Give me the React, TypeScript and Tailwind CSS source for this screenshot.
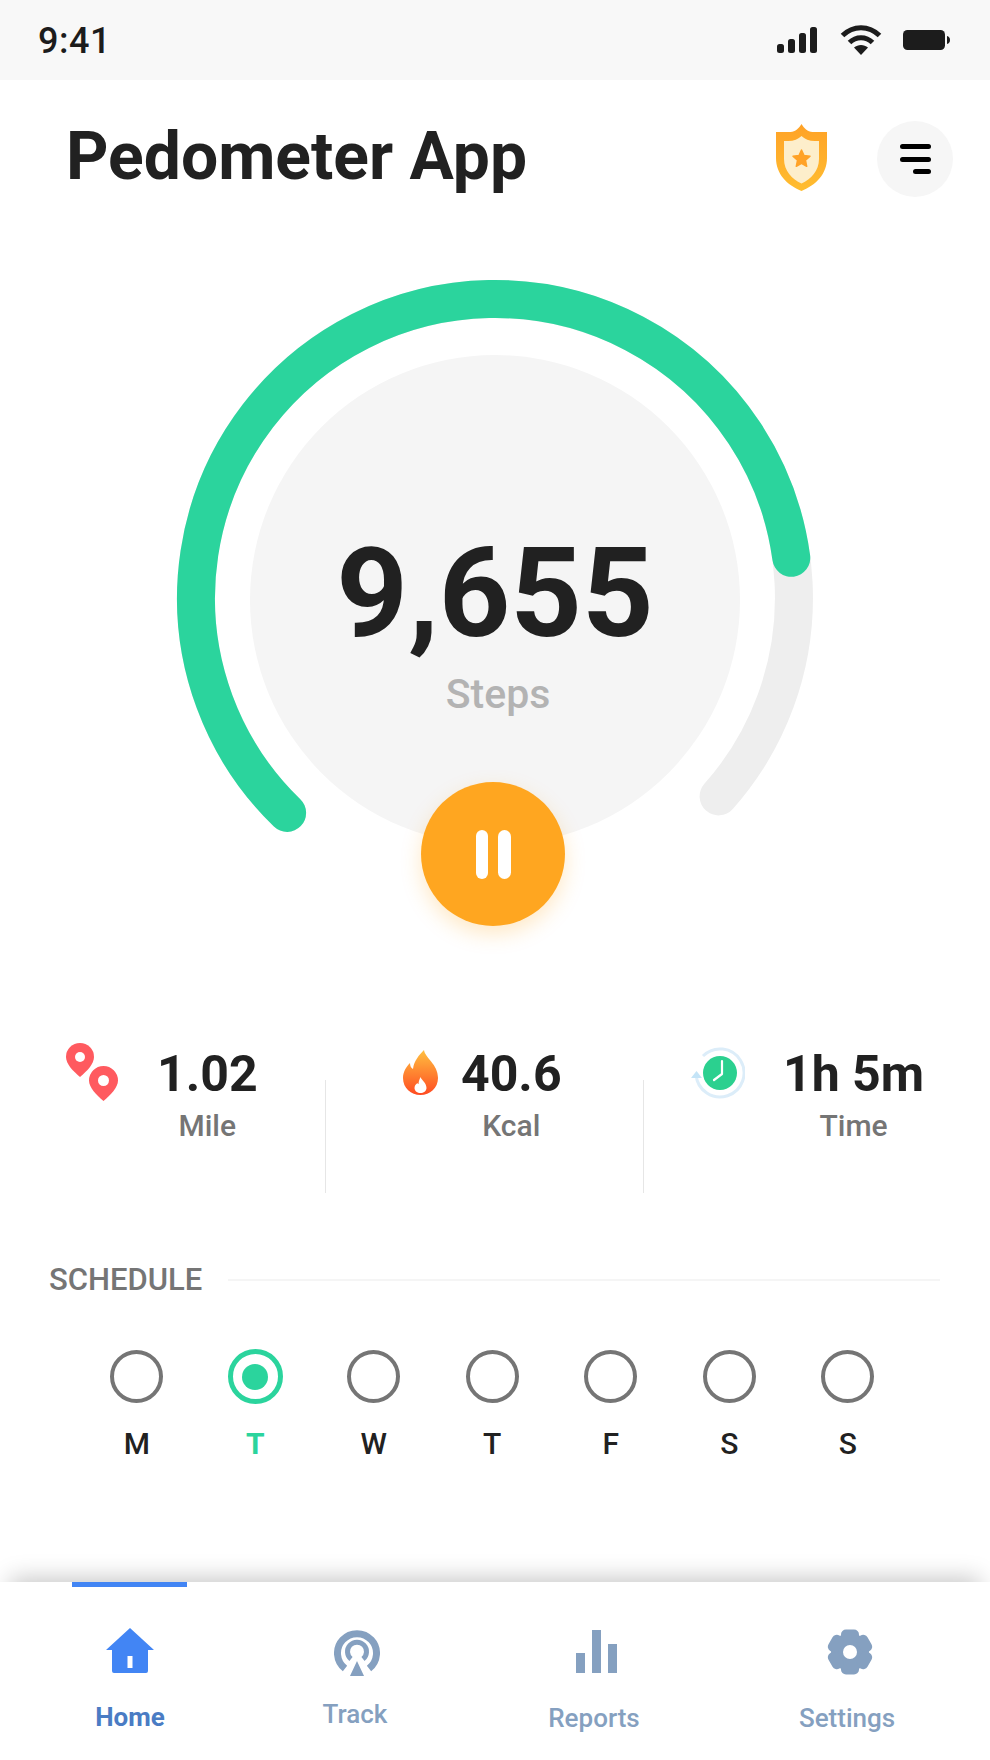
const days = ['M', 'T', 'W', 'T', 'F', 'S', 'S'];

function StatusIcons() {
  return (
    <div className="flex items-center gap-[21px]">
      <svg width="42" height="26" viewBox="0 0 42 26" fill="#1c1c1c">
        <rect x="0" y="17" width="7" height="9" rx="2.5" />
        <rect x="11" y="12" width="7" height="14" rx="2.5" />
        <rect x="22" y="6" width="7" height="20" rx="2.5" />
        <rect x="33" y="0" width="7" height="26" rx="2.5" />
      </svg>
      <svg width="42" height="30" viewBox="0 0 42 30" fill="none" stroke="#1c1c1c" strokeWidth="5">
        <path d="M2.5 10.5C13 0 29 0 39.5 10.5" />
        <path d="M9.5 17.5C16 11 26 11 32.5 17.5" />
        <path d="M21 30l-7-7.5c4-3.4 10-3.4 14 0z" fill="#1c1c1c" stroke="none" />
      </svg>
      <svg width="47" height="20" viewBox="0 0 47 20" fill="#1c1c1c">
        <rect x="0" y="0" width="42" height="20" rx="4.5" />
        <path d="M44 6c2 .5 3 2 3 4s-1 3.500-3 4z" />
      </svg>
    </div>
  );
}

function ShieldIcon() {
  return (
    <svg width="51" height="67" viewBox="0 0 51 67">
      <defs>
        <linearGradient id="shield" x1="0" y1="0" x2="0" y2="1">
          <stop offset="0" stopColor="#ffa227" />
          <stop offset="1" stopColor="#ffbd30" />
        </linearGradient>
      </defs>
      <path d="M25.5 0c2.500 4 6 8 11 8H51v26c0 16-11 27-25.500 33C11 61 0 50 0 34V8h14.500c5 0 8.500-4 11-8z" fill="url(#shield)" />
      <path d="M25.500 12c3 3 8 5 13 5h4.500v18c0 12-8 20-17.500 24.500C16 55 8 47 8 35V17h4.500c5 0 10-2 13-5z" fill="#fdeecb" />
      <path d="M25.500 26l2.500 5.500 6 .7-4.500 4.100 1.200 6-5.200-3-5.200 3 1.200-6-4.500-4.100 6-.7z" fill="#ffa227" stroke="#ffa227" strokeWidth="1.500" strokeLinejoin="round" />
    </svg>
  );
}

function Gauge() {
  return (
    <div className="relative mx-auto mt-[83px] flex h-[647px] w-[640px] flex-col items-center">
      <svg className="absolute inset-0" width="640" height="647" viewBox="0 0 640 647" fill="none">
        <circle cx="320" cy="321" r="245" fill="#f5f5f5" />
        <path d="M112.100 533.900A299 299 0 1 1 543.600 517.400" stroke="#eeeeee" strokeWidth="38" strokeLinecap="round" />
        <path d="M112.100 533.900A299 299 0 1 1 616.300 278.800" stroke="#2bd49d" strokeWidth="38" strokeLinecap="round" />
      </svg>
      <div className="relative mt-[245px] text-[125px] leading-[140px] font-bold text-[#212121]">9,655</div>
      <div className="relative mt-[7px] ml-[6px] text-[41px] leading-[46px] font-medium text-[#b3b3b3]">Steps</div>
      <button className="absolute bottom-0 left-[246px] flex h-[144px] w-[144px] items-center justify-center gap-[10px] rounded-full bg-[#ffa620] shadow-[0_8px_20px_rgba(255,166,32,0.25)]">
        <span className="h-[49px] w-[12.500px] rounded-full bg-white" />
        <span className="h-[49px] w-[12.500px] rounded-full bg-white" />
      </button>
    </div>
  );
}

function PinsIcon() {
  return (
    <svg width="52" height="58" viewBox="0 0 52 58">
      <path d="M14 0a14 14 0 0 1 14 14c0 7-7 14-14 20C7 28 0 21 0 14A14 14 0 0 1 14 0z" fill="#ff5a5f" />
      <circle cx="14" cy="14" r="5" fill="#fff" />
      <path d="M37.500 23a14.500 14.500 0 0 1 14.500 14.500c0 7-7.500 14.500-14.500 20.500C30.500 52 23 44.500 23 37.500A14.500 14.500 0 0 1 37.500 23z" fill="#ff5a5f" />
      <circle cx="37.500" cy="37.500" r="5.500" fill="#fff" />
    </svg>
  );
}

function FlameIcon() {
  return (
    <svg width="35" height="45" viewBox="0 0 35 45">
      <defs>
        <linearGradient id="flame" x1="0" y1="0" x2="0" y2="1">
          <stop offset="0" stopColor="#ffc040" />
          <stop offset="1" stopColor="#ff4b22" />
        </linearGradient>
      </defs>
      <path d="M21 0c1 8 14 14 14 28 0 10-8 17-17.500 17S0 38 0 28c0-6 3-11 7-15 0 3 1 5 3 6 1-8 6-14 11-19z" fill="url(#flame)" />
      <path d="M17.500 27c1 3 6 6 6 11 0 3-3 5-6 5s-6-2-6-5c0-3 2-4 3-5 0 1 1 1 1 1 0-2 1-5 2-7z" fill="#fff" />
    </svg>
  );
}

function ClockIcon() {
  return (
    <svg width="54" height="52" viewBox="0 0 54 52" fill="none">
      <path d="M12 9A24 24 0 1 1 5.100 28" stroke="#dcedf9" strokeWidth="3" />
      <path d="M0 31h11l-5.500-7z" fill="#c4e4f7" />
      <circle cx="29" cy="26" r="17" fill="#2bd08f" />
      <path d="M31 14v13l-8 6" stroke="#fff" strokeWidth="2.200" strokeLinecap="round" strokeLinejoin="round" />
    </svg>
  );
}

function Stat({ value, label, className, gap, icon }: { value: string; label: string; className: string; gap: string; icon: React.ReactNode }) {
  return (
    <div className={`flex items-start ${className}`}>
      {icon}
      <div className={`flex flex-col items-center ${gap}`}>
        <div className="text-[50px] leading-[60px] font-bold text-[#212121]">{value}</div>
        <div className="mt-[4px] text-[30px] leading-[36px] font-medium text-[#757575]">{label}</div>
      </div>
    </div>
  );
}

function Stats() {
  return (
    <div className="mt-[117px] flex h-[150px]">
      <Stat className="w-[325px] pl-[66px]" gap="ml-[39px] mt-[1px]" value="1.02" label="Mile" icon={<PinsIcon />} />
      <div className="h-[113px] w-px self-end bg-[#e6e6e6]" />
      <Stat className="w-[317px] pl-[77px]" gap="ml-[23px] mt-[1px]" value="40.6" label="Kcal" icon={<div className="mt-[7px]"><FlameIcon /></div>} />
      <div className="h-[113px] w-px self-end bg-[#e6e6e6]" />
      <Stat className="flex-1 pl-[47px]" gap="ml-[38px] mt-[1px]" value="1h 5m" label="Time" icon={<div className="mt-[4px]"><ClockIcon /></div>} />
    </div>
  );
}

function Schedule() {
  return (
    <div className="mt-[69px]">
      <div className="flex items-center pr-[50px] pl-[49px]">
        <span className="text-[31px] leading-[36px] font-medium text-[#757575]">SCHEDULE</span>
        <div className="ml-[26px] h-[2px] flex-1 bg-[#f5f5f5]" />
      </div>
      <div className="mt-[51px] flex pl-[77.500px]">
        {days.map((day, i) => (
          <div key={i} className="flex w-[118.500px] flex-col items-center">
            {i === 1 ? (
              <div className="flex h-[55px] w-[55px] items-center justify-center rounded-full border-[5px] border-[#2bd49d]">
                <div className="h-[26px] w-[26px] rounded-full bg-[#2bd49d]" />
              </div>
            ) : (
              <div className="my-[1px] h-[53px] w-[53px] rounded-full border-4 border-[#757575]" />
            )}
            <span className={`mt-[22px] text-[30px] leading-[36px] ${i === 1 ? 'font-bold text-[#2bd49d]' : 'font-medium text-[#212121]'}`}>{day}</span>
          </div>
        ))}
      </div>
    </div>
  );
}

function HomeIcon() {
  return (
    <svg width="48" height="46" viewBox="0 0 48 46" fill="#4285f4">
      <path d="M24 0l24 22H42v21a2 2 0 0 1-2 2H8a2 2 0 0 1-2-2V22H0z" />
      <rect x="21.500" y="28" width="5" height="12" fill="#fff" />
    </svg>
  );
}

function TrackIcon() {
  return (
    <svg className="mt-[2px] ml-[4px]" width="46" height="46" viewBox="0 0 46 46" fill="none" stroke="#85a0c0">
      <path d="M11 38.500A19.500 19.500 0 1 1 35 38.500" strokeWidth="7" />
      <path d="M17 29A9.500 9.500 0 1 1 29 29" strokeWidth="5" />
      <path d="M23 31l7 15H16z" fill="#85a0c0" stroke="none" />
    </svg>
  );
}

function ReportsIcon() {
  return (
    <svg className="mt-[2px] ml-[4px]" width="41" height="46" viewBox="0 0 41 46" fill="#85a0c0">
      <rect x="0" y="23" width="9" height="20" />
      <rect x="16" y="0" width="9" height="43" />
      <rect x="32" y="14" width="9" height="29" />
    </svg>
  );
}

function SettingsIcon() {
  const teeth = [0, 60, 120, 180, 240, 300];
  return (
    <svg className="mt-[1px] ml-[5px]" width="46" height="46" viewBox="0 0 46 46" fill="#85a0c0">
      <circle cx="23" cy="23" r="19" />
      {teeth.map((a) => (
        <rect key={a} x="14" y="0.500" width="18" height="12" rx="5" transform={`rotate(${a} 23 23)`} />
      ))}
      <circle cx="23" cy="23" r="7" fill="#fff" />
    </svg>
  );
}

const tabs = [
  { label: 'Home', width: 'w-[260px]', icon: <HomeIcon />, text: 'mt-[27px] font-bold text-[#4a7cc4]' },
  { label: 'Track', width: 'w-[190px]', icon: <TrackIcon />, text: 'mt-[22px] font-medium text-[#85a0c0]' },
  { label: 'Reports', width: 'w-[288px]', icon: <ReportsIcon />, text: 'mt-[26px] font-medium text-[#85a0c0]' },
  { label: 'Settings', width: 'w-[218px]', icon: <SettingsIcon />, text: 'mt-[27px] font-medium text-[#85a0c0]' },
];

function BottomNav() {
  return (
    <nav className="relative mt-auto flex h-[178px] bg-white pt-[46px] shadow-[0_-14px_22px_-10px_rgba(0,0,0,0.22)]">
      <div className="absolute top-0 left-[72px] h-[5px] w-[115px] bg-[#4285f4]" />
      {tabs.map((tab) => (
        <div key={tab.label} className={`flex flex-col items-center ${tab.width}`}>
          {tab.icon}
          <span className={`text-[26px] leading-[32px] ${tab.text}`}>{tab.label}</span>
        </div>
      ))}
    </nav>
  );
}

export default function App() {
  return (
    <div className="flex h-[1760px] w-[990px] flex-col overflow-hidden bg-white font-['Roboto',sans-serif]">
      <div className="flex h-[80px] items-center justify-between bg-[#f8f8f8] pr-[40px] pl-[38px]">
        <span className="mt-[2px] text-[36px] leading-none font-medium tracking-[0.5px] text-[#1c1c1c]">9:41</span>
        <StatusIcons />
      </div>
      <header className="mt-[38px] flex h-[78px] items-center pr-[37px] pl-[66px]">
        <h1 className="flex-1 text-[66px] leading-none font-bold text-[#212121]">Pedometer App</h1>
        <ShieldIcon />
        <button className="mt-[4px] ml-[50px] flex h-[76px] w-[76px] flex-col items-end justify-center gap-[7.500px] rounded-full bg-[#f6f6f6] pr-[22px]">
          <span className="h-[5px] w-[31px] rounded-full bg-black" />
          <span className="h-[5px] w-[31px] rounded-full bg-black" />
          <span className="h-[5px] w-[18px] rounded-full bg-black" />
        </button>
      </header>
      <Gauge />
      <Stats />
      <Schedule />
      <BottomNav />
    </div>
  );
}
